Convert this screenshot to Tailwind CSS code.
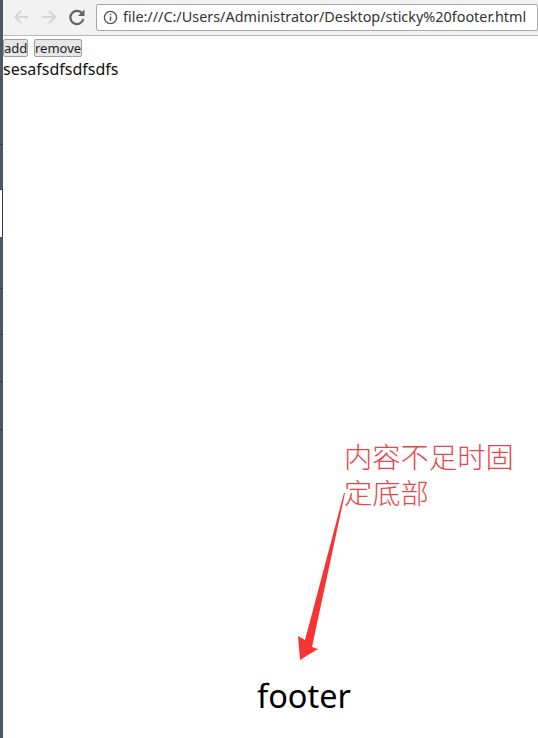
<!DOCTYPE html>
<html lang="zh">
<head>
  <meta charset="UTF-8">
  <title>sticky footer</title>
  <script src="https://cdn.jsdelivr.net/npm/@tailwindcss/browser@4"></script>
</head>
<body class="bg-white h-[738px] overflow-hidden flex font-['Noto_Sans','Liberation_Sans',sans-serif]">

  <!-- window edge, desktop behind shows through in pieces -->
  <div class="w-[3px] shrink-0 flex flex-col bg-[#4a5a6a]">
    <div class="h-[145px] border-b border-[#2e3a46]"></div>
    <div class="h-[45px] border-b border-[#2e3a46]"></div>
    <div class="h-[47px] bg-white border-r border-[#2e3a46]"></div>
    <div class="h-[52px] border-b border-[#2e3a46]"></div>
    <div class="h-[46px] border-b border-[#2e3a46]"></div>
    <div class="h-[47px] border-b border-[#2e3a46]"></div>
    <div class="h-[48px] border-b border-[#2e3a46]"></div>
  </div>

  <div class="flex-1 min-w-0 flex flex-col relative">
    <!-- toolbar -->
    <div class="h-[36px] shrink-0 flex items-start bg-[#f2f2f2] border-b border-[#b8b8b8] pl-[9px] pt-[4px]">
      <svg class="w-[18px] h-[18px] mt-[4px]" viewBox="0 0 18 18" fill="none" stroke="#d4d4d4" stroke-width="2"><path d="M16 9H3M9 3L3 9l6 6"/></svg>
      <svg class="w-[18px] h-[18px] mt-[4px] ml-[10px]" viewBox="0 0 18 18" fill="none" stroke="#d4d4d4" stroke-width="2"><path d="M2 9h13M9 3l6 6-6 6"/></svg>
      <svg class="w-[18px] h-[18px] mt-[4px] ml-[10px]" viewBox="0 0 18 18" fill="none" stroke="#5f6368" stroke-width="2.2"><path d="M14.6 6A6.6 6.6 0 1 0 15.4 11"/><path d="M16.5 1.5v6.5h-6.5" fill="#5f6368" stroke="none"/></svg>
      <div class="flex-1 h-[27px] ml-[10px] flex items-center bg-white border border-[#a9a9a9] rounded-[2px] pl-[6px] gap-[5px]">
        <svg class="w-[15px] h-[15px] shrink-0" viewBox="0 0 14 14" fill="none" stroke="#555"><circle cx="7" cy="7" r="5.7" stroke-width="1.3"/><path d="M7 6v4M7 3.6v1.3" stroke-width="1.4"/></svg>
        <span class="text-[14.4px] leading-none whitespace-nowrap text-[#333]">file:///C:/Users/Administrator/Desktop/sticky%20footer.html</span>
      </div>
    </div>

    <!-- page -->
    <div class="flex gap-[6px] mt-[3px]">
      <button class="h-[18px] w-[25px] text-[13px] leading-none text-[#222] bg-[#e6e6e6] border border-[#a0a0a0] rounded-[2px]">add</button>
      <button class="h-[18px] w-[48px] text-[13px] leading-none text-[#222] bg-[#e6e6e6] border border-[#a0a0a0] rounded-[2px]">remove</button>
    </div>
    <div class="text-[16px] leading-[22px] mt-[1px] text-[#111]">sesafsdfsdfsdfs</div>

    <div class="mt-auto mb-[22px] text-center text-[32.5px] leading-[40px] text-black pl-[67px]">footer</div>

    <!-- annotation -->
    <div class="absolute left-[341px] top-[438px] w-[180px] text-[28.3px] leading-[36px] text-[#e8474a] font-light font-['Noto_Sans_CJK_SC','Liberation_Sans',sans-serif]">内容不足时固定底部</div>
    <svg class="absolute left-[280px] top-[485px]" width="80" height="185" viewBox="0 0 80 185" fill="#f73434">
      <path d="M61 8L62 8L29 162L35 164L17 175L15 151L22 155Z"/>
    </svg>
  </div>
</body>
</html>
